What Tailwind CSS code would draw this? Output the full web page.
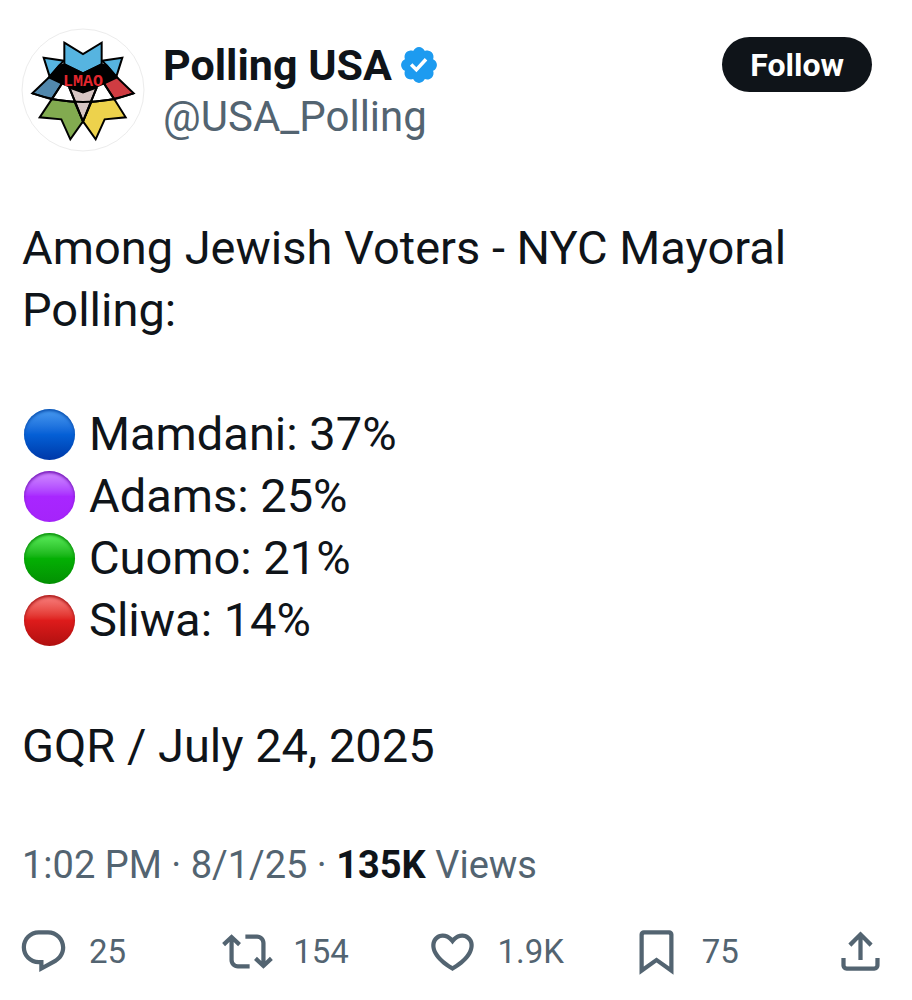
<!DOCTYPE html>
<html lang="en">
  <head>
    <meta charset="UTF-8" />
    <meta name="viewport" content="width=device-width, initial-scale=1" />
    <title>Polling USA</title>
    <script src="https://cdn.jsdelivr.net/npm/@tailwindcss/browser@4"></script>
  </head>
  <body class="bg-white text-[#0f1419] font-['Roboto','Liberation_Sans',sans-serif]">
    <article class="pt-7">
      <header class="flex items-start pl-[21px] pr-10">
        <a href="#" aria-label="Polling USA profile" class="shrink-0">
          <svg class="size-[124px]" viewBox="32 24 372 372">
            <circle cx="218" cy="210" r="183" fill="#fff" stroke="#ececec" stroke-width="3" />
            <g stroke="#000" stroke-width="6" stroke-linejoin="miter">
              <path fill="#56b4e0" d="M100 113L161 122L146 137L118 170Z" />
              <path fill="#56b4e0" d="M336 113L275 122L290 137L318 170Z" />
              <path fill="#56b4e0" d="M162 68L218 102L274 68V134L218 160L162 134Z" />
              <path fill="#5288ad" d="M118 170L66 220L124 238L156 189Z" />
              <path fill="#cf3c42" d="M318 170L370 220L312 238L280 189Z" />
              <path fill="#82ab50" d="M124 238L88 292L153 298L180 358L218 304L193 246Z" />
              <path fill="#edd24c" d="M312 238L346 292L283 298L256 358L218 304L243 246Z" />
              <path fill="#d6c5c3" d="M177 203L218 217L259 203L218 304Z" />
              <path fill="#000" d="M147 137L163 133L218 160L273 133L289 137L320 172L282 190L218 216L154 190L116 172Z" />
              <path fill="none" d="M66 220Q218 272 370 220M156 189L124 238M280 189L312 238M177 203L218 304L259 203" />
            </g>
            <text x="158" y="198" fill="#e3262e" font-size="50" font-weight="bold" font-family="Liberation Mono, monospace">LMAO</text>
          </svg>
        </a>
        <div class="ml-[18px] mt-[11px] min-w-0">
          <div class="flex items-center gap-1.5">
            <a href="#" class="text-[43px] leading-[52px] font-bold whitespace-nowrap">Polling USA</a>
            <svg class="size-[42px] shrink-0" viewBox="0 0 22 22" fill="#1d9bf0" role="img" aria-label="Verified account">
              <path d="M20.396 11c-.018-.646-.215-1.275-.57-1.816-.354-.54-.852-.972-1.438-1.246.223-.607.27-1.264.14-1.897-.131-.634-.437-1.218-.882-1.687-.47-.445-1.053-.75-1.687-.882-.633-.13-1.29-.083-1.897.14-.273-.587-.704-1.086-1.245-1.44S11.647 1.62 11 1.604c-.646.017-1.273.213-1.813.568s-.969.854-1.24 1.44c-.608-.223-1.267-.272-1.902-.14-.635.13-1.22.436-1.69.882-.445.47-.749 1.055-.878 1.688-.13.633-.08 1.29.144 1.896-.587.274-1.087.705-1.443 1.245-.356.54-.555 1.17-.574 1.817.02.647.218 1.276.574 1.817.356.54.856.972 1.443 1.245-.224.606-.274 1.263-.144 1.896.13.634.433 1.218.877 1.688.47.443 1.054.747 1.687.878.633.132 1.29.084 1.897-.136.274.586.705 1.084 1.246 1.439.54.354 1.17.551 1.816.569.647-.016 1.276-.213 1.817-.567s.972-.854 1.245-1.44c.604.239 1.266.296 1.903.164.636-.132 1.22-.447 1.68-.907.46-.46.776-1.044.908-1.681s.075-1.299-.165-1.903c.586-.274 1.084-.705 1.439-1.246.354-.54.551-1.17.569-1.816zM9.662 14.85l-3.429-3.428 1.293-1.302 2.072 2.072 4.4-4.794 1.347 1.246z" />
            </svg>
          </div>
          <a href="#" class="block text-[42px] leading-[52px] text-[#536471]">@USA_Polling</a>
        </div>
        <button type="button" class="ml-auto mt-[9px] h-[55px] shrink-0 rounded-full bg-[#0f1419] px-7 text-[32px] font-bold text-white">Follow</button>
      </header>

      <div class="mt-[65px] px-[22px] text-[47px] leading-[62px]">
        <p>Among Jewish Voters - NYC Mayoral Polling:</p>
        <ul class="mt-[62px]">
          <li class="flex items-center gap-3.5">
            <span class="ml-0.5 size-[51px] rounded-full bg-linear-to-b from-[#4a9cf0] via-[#0560d6] to-[#0038a8] shadow-[inset_0_2px_3px_#0a50b0]"></span>
            Mamdani: 37%
          </li>
          <li class="flex items-center gap-3.5">
            <span class="ml-0.5 size-[51px] rounded-full bg-linear-to-b from-[#d38cff] via-[#a826ff] to-[#a524fa] shadow-[inset_0_2px_3px_#7416b8]"></span>
            Adams: 25%
          </li>
          <li class="flex items-center gap-3.5">
            <span class="ml-0.5 size-[51px] rounded-full bg-linear-to-b from-[#5cf05c] via-[#04b004] to-[#039003] shadow-[inset_0_2px_3px_#068a06]"></span>
            Cuomo: 21%
          </li>
          <li class="flex items-center gap-3.5">
            <span class="ml-0.5 size-[51px] rounded-full bg-linear-to-b from-[#f88080] via-[#de1b1b] to-[#b01010] shadow-[inset_0_2px_3px_#a81414]"></span>
            Sliwa: 14%
          </li>
        </ul>
        <p class="mt-16">GQR / July 24, 2025</p>
      </div>

      <p class="mt-[62px] px-[22px] text-[38px] leading-[52px] text-[#536471]">
        <a href="#">1:02 PM · 8/1/25</a> · <a href="#"><b class="text-[#0f1419]">135K</b> Views</a>
      </p>

      <footer class="mt-[35px] flex pl-[18px] pr-[26px] pb-6 text-[33px] leading-[51px] text-[#536471]">
        <div class="flex-1">
          <button type="button" aria-label="25 replies" class="flex items-center gap-5">
            <svg class="size-[51px]" viewBox="0 0 24 24" fill="currentColor">
              <path d="M1.751 10c0-4.42 3.584-8 8.005-8h4.366c4.49 0 8.129 3.64 8.129 8.13 0 2.96-1.607 5.68-4.196 7.11l-8.054 4.46v-3.69h-.067c-4.49.1-8.183-3.51-8.183-8.01zm8.005-6c-3.317 0-6.005 2.69-6.005 6 0 3.37 2.77 6.08 6.138 6.01l.351-.01h1.761v2.3l5.087-2.81c1.951-1.08 3.163-3.13 3.163-5.36 0-3.39-2.744-6.13-6.129-6.13H9.756z" />
            </svg>
            25
          </button>
        </div>
        <div class="flex-1">
          <button type="button" aria-label="154 reposts" class="flex items-center gap-5">
            <svg class="size-[51px]" viewBox="0 0 24 24" fill="currentColor">
              <path d="M4.5 3.88l4.432 4.14-1.364 1.46L5.5 7.55V16c0 1.1.896 2 2 2H13v2H7.5c-2.209 0-4-1.79-4-4V7.55L1.432 9.48.068 8.02 4.5 3.88zM16.5 6H11V4h5.5c2.209 0 4 1.79 4 4v8.45l2.068-1.93 1.364 1.46-4.432 4.14-4.432-4.14 1.364-1.46 2.068 1.93V8c0-1.1-.896-2-2-2z" />
            </svg>
            154
          </button>
        </div>
        <div class="flex-1">
          <button type="button" aria-label="1.9K likes" class="flex items-center gap-5">
            <svg class="size-[51px]" viewBox="0 0 24 24" fill="currentColor">
              <path d="M16.697 5.5c-1.222-.06-2.679.51-3.89 2.16l-.805 1.09-.806-1.09C9.984 6.01 8.526 5.44 7.304 5.5c-1.243.07-2.349.78-2.91 1.91-.552 1.12-.633 2.78.479 4.82 1.074 1.97 3.257 4.27 7.129 6.61 3.87-2.34 6.052-4.64 7.126-6.61 1.111-2.04 1.03-3.7.477-4.82-.561-1.13-1.666-1.84-2.908-1.91zm4.187 7.69c-1.351 2.48-4.001 5.12-8.379 7.67l-.503.3-.504-.3c-4.379-2.55-7.029-5.19-8.382-7.67-1.36-2.5-1.41-4.86-.514-6.67.887-1.79 2.647-2.91 4.601-3.01 1.651-.09 3.368.56 4.798 2.01 1.429-1.45 3.146-2.1 4.796-2.01 1.954.1 3.714 1.22 4.601 3.01.896 1.81.846 4.17-.514 6.67z" />
            </svg>
            1.9K
          </button>
        </div>
        <div class="flex-1">
          <button type="button" aria-label="75 bookmarks" class="flex items-center gap-5">
            <svg class="size-[51px]" viewBox="0 0 24 24" fill="currentColor">
              <path d="M4 4C4 2.9 4.9 2 6 2h12c1.1 0 2 .9 2 2v18.94l-8-5.71-8 5.71V4zM6.3 4c-.2 0-.3.1-.3.3v14.76l6-4.29 6 4.29V4.3c0-.2-.1-.3-.3-.3H6.3z" />
            </svg>
            75
          </button>
        </div>
        <button type="button" aria-label="Share">
          <svg class="size-[51px]" viewBox="0 0 24 24" fill="currentColor">
            <path d="M12 2.59l5.7 5.7-1.41 1.42L13 6.41V16h-2V6.41l-3.3 3.3-1.41-1.42L12 2.59zM21 15l-.02 3.51c0 1.38-1.12 2.49-2.5 2.49H5.5C4.11 21 3 19.88 3 18.5V15h2v3.5c0 .28.22.5.5.5h12.98c.28 0 .5-.22.5-.5L19 15h2z" />
          </svg>
        </button>
      </footer>
    </article>
  </body>
</html>
